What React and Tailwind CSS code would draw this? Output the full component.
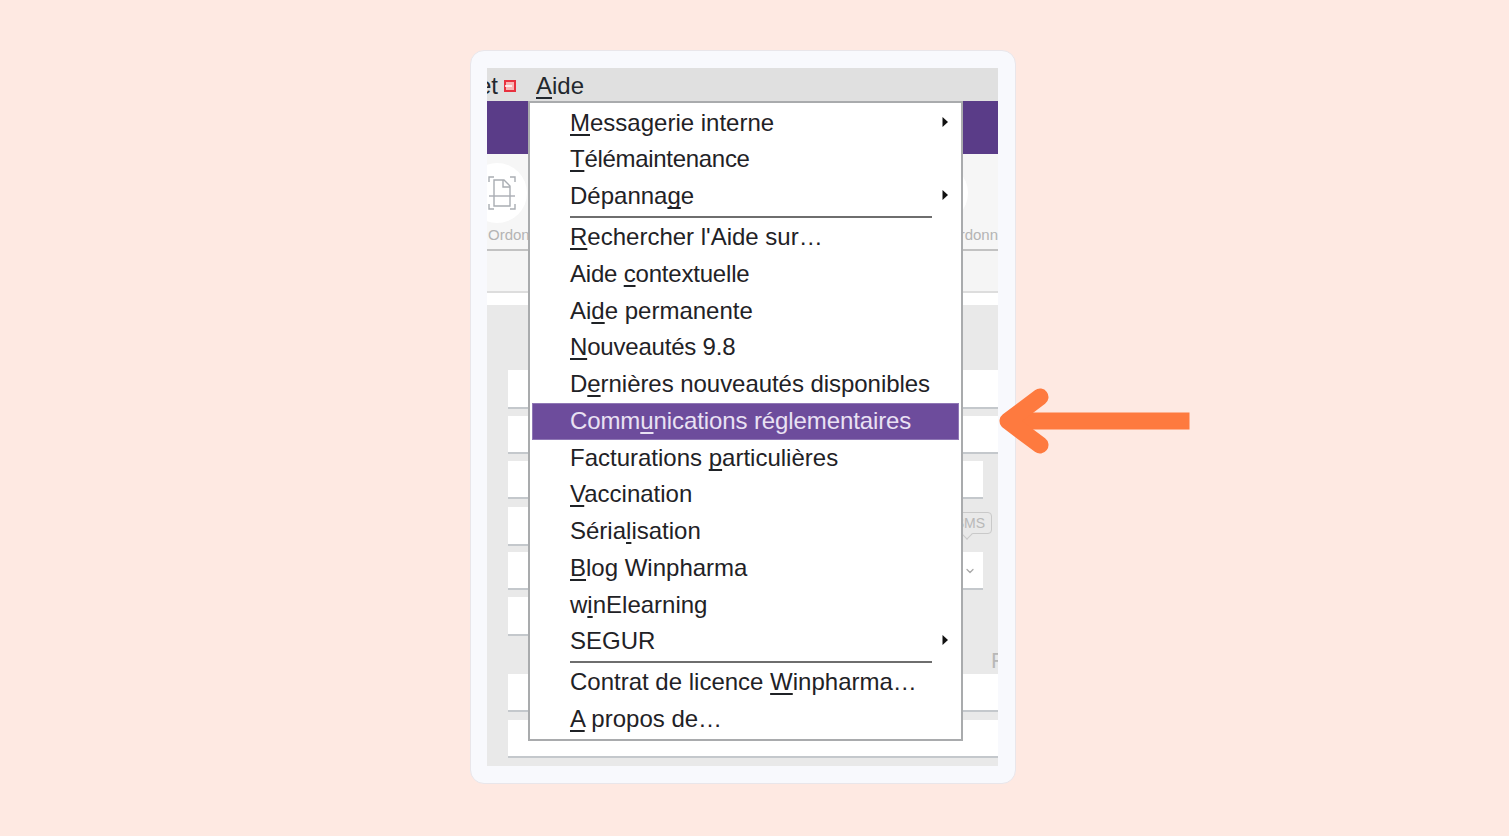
import React from "react";
import { ChevronDown } from "lucide-react";

const Caret = () => (
  <svg width="8" height="12" viewBox="0 0 8 12" className="absolute left-[408px] top-[10px]">
    <path d="M1.5 1 L7 6 L1.5 11 Z" fill="#111" />
  </svg>
);

const Item = ({ pre = "", u = "", post = "", sub = false, active = false, cls = "" }) => (
  <div
    className={
      (active
        ? "relative h-[36.75px] leading-[33px] pl-[37px] bg-[#6d4c9c] text-[#e9e1f3] border border-[#8f77b5] "
        : "relative h-[36.75px] leading-[33px] pl-[37px] text-[#1f2226] border border-transparent ") + cls
    }
  >
    {pre}
    {u ? <u className="underline underline-offset-[3px] [text-decoration-skip-ink:none]">{u}</u> : null}
    {post}
    {sub ? <Caret /> : null}
  </div>
);

const Sep = () => (
  <div className="h-[4.3px] pt-[1px] pl-[38px]">
    <div className="w-[362px] h-[2px] bg-[#6e6e6e]" />
  </div>
);

const DocIcon = () => (
  <svg width="30" height="36" viewBox="0 0 30 36" fill="none" stroke="#a9adb3" strokeWidth="1.4">
    <path d="M2 7V2h5M23 2h5v5M2 29v5h5M23 34h5v-5" />
    <path d="M7 5h10l6 6v20H7z" />
    <path d="M16 5v7h7" />
    <path d="M2 21h26" />
  </svg>
);

export default function App() {
  return (
    <div className="relative min-h-screen h-[836px] overflow-hidden bg-[#fee9e2] pl-[470px] pt-[50px] font-['Liberation_Sans',Arial,sans-serif]">
      <div className="w-[546px] h-[734px] rounded-[14px] bg-[#f8f9fd] border border-[#e9e6ea] pl-[16px] pt-[17px]">
        <div className="relative w-[511px] h-[698px] overflow-hidden bg-white flex flex-col">
          {/* menu bar */}
          <div className="h-[33px] shrink-0 bg-[#e0e0e0] flex items-center pt-[2px] text-[24px] text-[#23282e]">
            <span className="-ml-[14px] w-[25px] text-right leading-none">et</span>
            <svg width="12" height="12" viewBox="0 0 12 12" className="ml-[6px]" fill="none">
              <rect x="1" y="1" width="10" height="10" fill="#f8b5b5" stroke="#e8313f" strokeWidth="2" />
              <path d="M1 6h7" stroke="#ffffff" strokeWidth="1.5" />
            </svg>
            <span className="ml-[20px]">
              <u className="underline underline-offset-[3px]">A</u>ide
            </span>
          </div>
          {/* purple band */}
          <div className="h-[53px] shrink-0 bg-[#5a3c88]" />
          {/* toolbar */}
          <div className="h-[97px] shrink-0 bg-[#f6f6f6] flex justify-between overflow-hidden border-b-2 border-[#c2c2c2]">
            <div className="w-[41px] relative shrink-0">
              <div className="w-[60px] h-[60px] mt-[9px] -ml-[20px] rounded-full bg-white flex items-center justify-center">
                <span className="ml-[9px]">
                  <DocIcon />
                </span>
              </div>
              <div className="mt-[3px] ml-[1px] text-[15px] leading-[18px] text-[#b4b4b4] whitespace-nowrap">Ordon</div>
            </div>
            <div className="w-[90px] shrink-0">
              <div className="w-[60px] h-[60px] mt-[9px] rounded-full bg-white" />
              <div className="mt-[3px] ml-[40px] text-[15px] leading-[18px] text-[#b4b4b4] whitespace-nowrap">Ordonnance</div>
            </div>
          </div>
          {/* sub toolbar */}
          <div className="h-[42px] shrink-0 bg-[#f5f5f5] border-b-2 border-[#dddddd]" />
          <div className="h-[12px] shrink-0 bg-white" />
          {/* form */}
          <div className="flex-1 bg-[#e9e9e9] pl-[21px] flex flex-col">
            <div className="h-[39px] mt-[65px] shrink-0 bg-white border-b-2 border-[#c4c8cc]" />
            <div className="h-[38px] mt-[7px] shrink-0 bg-white border-b-2 border-[#c4c8cc]" />
            <div className="h-[38px] mt-[7px] shrink-0 w-[475px] bg-white border-b-2 border-[#c4c8cc]" />
            <div className="h-[39px] mt-[8px] shrink-0 flex">
              <div className="w-[440px] bg-white border-b-2 border-[#c4c8cc]" />
              <div className="relative ml-[2px] mt-[5px] w-[42px] h-[22px] rounded-[4px] border border-[#c9c9c9] text-[14px] leading-[20px] text-[#b8b8b8] text-right pr-[6px]">
                SMS
                <div className="absolute left-[12px] -bottom-[5px] w-[8px] h-[8px] rotate-45 bg-[#e9e9e9] border-r border-b border-[#c9c9c9]" />
              </div>
            </div>
            <div className="h-[38px] mt-[6px] shrink-0 w-[475px] bg-white border-b-2 border-[#c4c8cc] flex items-center justify-end pr-[7px] pt-[2px]">
              <ChevronDown size={12} color="#a8a8a8" strokeWidth={2.5} />
            </div>
            <div className="h-[39px] mt-[7px] shrink-0 w-[440px] bg-white border-b-2 border-[#c4c8cc]" />
            <div className="h-[38px] shrink-0 flex justify-end overflow-hidden">
              <span className="w-[7px] mt-[12px] overflow-hidden text-[22px] leading-[26px] text-[#b8b8b8]">F</span>
            </div>
            <div className="h-[38px] shrink-0 bg-white border-b-2 border-[#c4c8cc]" />
            <div className="h-[38px] mt-[8px] shrink-0 bg-white border-b-2 border-[#c4c8cc]" />
          </div>

          {/* dropdown */}
          <div className="absolute left-[41px] top-[33px] w-[435px] h-[640px] bg-white border-2 border-[#a9abad] pt-[1.5px] px-[2px] text-[24px]">
            <Item u="M" post="essagerie interne" sub />
            <Item u="T" post="élémaintenance" cls="tracking-[-0.3px]" />
            <Item pre="Dépanna" u="g" post="e" sub />
            <Sep />
            <Item u="R" post="echercher l'Aide sur…" />
            <Item pre="Aide " u="c" post="ontextuelle" cls="tracking-[-0.2px]" />
            <Item pre="Ai" u="d" post="e permanente" />
            <Item u="N" post="ouveautés 9.8" cls="tracking-[-0.2px]" />
            <Item pre="D" u="e" post="rnières nouveautés disponibles" cls="tracking-[-0.05px]" />
            <Item pre="Comm" u="u" post="nications réglementaires" active cls="tracking-[-0.1px]" />
            <Item pre="Facturations " u="p" post="articulières" />
            <Item u="V" post="accination" />
            <Item pre="Séria" u="l" post="isation" />
            <Item u="B" post="log Winpharma" />
            <Item pre="w" u="i" post="nElearning" />
            <Item pre="SEGUR" sub />
            <Sep />
            <Item pre="Contrat de licence " u="W" post="inpharma…" />
            <Item u="A" post=" propos de…" />
          </div>
        </div>
      </div>

      {/* arrow */}
      <svg className="absolute left-[995px] top-[385px]" width="200" height="72" viewBox="0 0 200 72" fill="none">
        <path d="M20 36H194.5" stroke="#fe7a3f" strokeWidth="17" />
        <path d="M45 12L13 36L45 60" stroke="#fe7a3f" strokeWidth="17" strokeLinecap="round" strokeLinejoin="round" />
      </svg>
    </div>
  );
}
